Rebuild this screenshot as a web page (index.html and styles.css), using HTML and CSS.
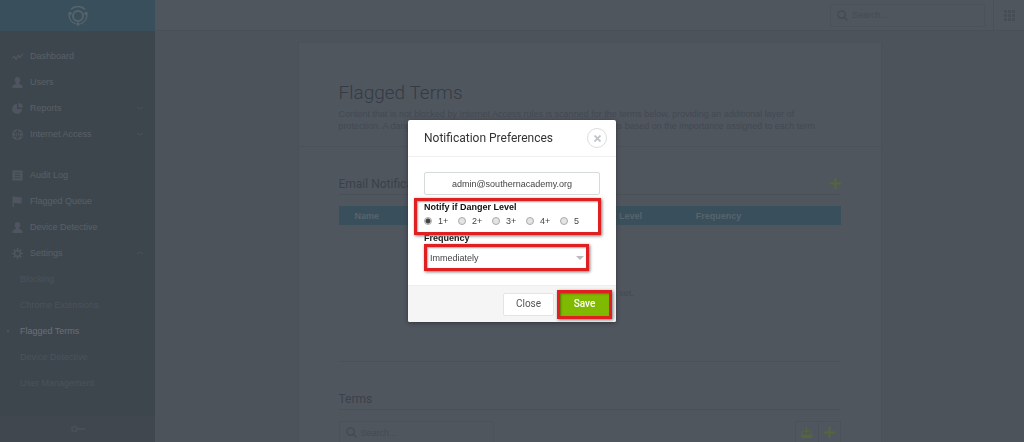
FILE: index.html
```html
<!DOCTYPE html>
<html lang="en">
<head>
    <meta charset="UTF-8">
    <meta name="viewport" content="width=device-width, initial-scale=1.0">
    <title>Flagged Terms</title>
    <link rel="stylesheet" href="styles.css">
</head>
<body>
    <div class="sidebar">
        <div class="logo">
            <svg width="20" height="20" viewBox="0 0 20 20" fill="none" stroke="currentColor">
                <circle cx="10" cy="10" r="5" stroke-width="2"/>
                <path d="M3 3.500a9.500 9.500 0 0 1 14 0M1.200 8.500a9 9 0 0 0 6.300 9.200M18.800 8.500a9 9 0 0 1-6.300 9.200" stroke-width="1.500"/>
                <g fill="currentColor" stroke="none"><circle cx="2" cy="7.500" r="1.800"/><circle cx="18" cy="7.500" r="1.800"/><circle cx="10" cy="18" r="1.800"/></g>
            </svg>
        </div>
        <nav class="nav">
            <ul class="menu">
                <li><a href="#"><svg class="icon" viewBox="0 0 12 12"><path d="M0 8l2.500-2 2 3L7 5l1.500 2L12 3" fill="none" stroke="currentColor" stroke-width="1.500"/></svg>Dashboard</a></li>
                <li><a href="#"><svg class="icon" viewBox="0 0 12 12"><path d="M6 0c2 0 3 1.500 3 3.200S8 6 7.500 7c0 1 4 1 4 3.500V12H.5v-1.500C.5 8 4.500 8 4.500 7 4 6 3 5 3 3.200S4 0 6 0z"/></svg>Users</a></li>
                <li><a href="#"><svg class="icon" viewBox="0 0 12 12"><path d="M5.500 1v5.500H11A5.500 5.500 0 1 1 5.500 1z"/><path d="M7 0a5 5 0 0 1 5 5H7z"/></svg>Reports<svg class="chevron" viewBox="0 0 6 4"><path d="M0 1l3 2 3-2"/></svg></a></li>
                <li><a href="#"><svg class="icon" viewBox="0 0 12 12"><circle cx="6" cy="6" r="6"/><path class="cut" d="M1 4h10M1 8h10M6 1v10M6 1C3 4 3 8 6 11M6 1c3 3 3 7 0 10"/></svg>Internet Access<svg class="chevron" viewBox="0 0 6 4"><path d="M0 1l3 2 3-2"/></svg></a></li>
            </ul>
            <ul class="menu">
                <li><a href="#"><svg class="icon" viewBox="0 0 12 12"><path d="M.5.500h11v11H.5z"/><path class="cut" d="M3 3.500h6M3 6h6M3 8.500h6"/></svg>Audit Log</a></li>
                <li><a href="#"><svg class="icon" viewBox="0 0 12 12"><path d="M.5.500h1.500V1c3-1 4 1 8.500 0v7c-4.500 1-5.500-1-8.500 0v4H.5z"/></svg>Flagged Queue</a></li>
                <li><a href="#"><svg class="icon" viewBox="0 0 12 12"><path d="M6 0c2 0 3 1.500 3 3.200S8 6 7.500 7c0 1 4 1 4 3.500V12H.5v-1.500C.5 8 4.500 8 4.500 7 4 6 3 5 3 3.200S4 0 6 0z"/></svg>Device Detective</a></li>
                <li><a href="#"><svg class="icon" viewBox="0 0 12 12" stroke="currentColor"><circle cx="6" cy="6" r="3.200" fill="none" stroke-width="1.800"/><path d="M6 0v2M6 10v2M0 6h2M10 6h2M1.800 1.800l1.400 1.400M8.800 8.800l1.400 1.400M10.200 1.800L8.800 3.200M3.200 8.800l-1.400 1.400" stroke-width="1.800"/></svg>Settings<svg class="chevron" viewBox="0 0 6 4"><path d="M0 3l3-2 3 2"/></svg></a></li>
            </ul>
            <ul class="submenu">
                <li><a href="#">Blocking</a></li>
                <li><a href="#">Chrome Extensions</a></li>
                <li class="active"><a href="#">Flagged Terms</a></li>
                <li><a href="#">Device Detective</a></li>
                <li><a href="#">User Management</a></li>
            </ul>
        </nav>
        <div class="sidebar-footer">
            <svg width="14" height="8" viewBox="0 0 14 8" fill="none" stroke="currentColor" stroke-width="2"><circle cx="3.500" cy="4" r="2.500"/><path d="M6 4h8"/></svg>
        </div>
    </div>

    <div class="main">
        <header class="topbar">
            <label class="search">
                <svg class="icon" viewBox="0 0 12 12"><path d="M8 8l3.500 3.500" stroke="currentColor" stroke-width="1.500"/><circle cx="5" cy="5" r="4" fill="none" stroke="currentColor" stroke-width="1.500"/></svg>
                <input type="text" placeholder="Search..." aria-label="Search">
            </label>
            <button class="apps" aria-label="Apps">
                <svg width="11" height="11" viewBox="0 0 11 11" fill="currentColor"><path d="M0 0h3v3H0zM4 0h3v3H4zM8 0h3v3H8zM0 4h3v3H0zM4 4h3v3H4zM8 4h3v3H8zM0 8h3v3H0zM4 8h3v3H4zM8 8h3v3H8z"/></svg>
            </button>
        </header>

        <div class="card">
            <div class="card-header">
                <h1>Flagged Terms</h1>
                <p>Content that is not blocked by Internet Access rules is scanned for the terms below, providing an additional layer of<br>protection. A danger level is then applied to the flagged pages and links based on the importance assigned to each term.</p>
            </div>
            <section class="notifications">
                <div class="section-title">
                    <h2>Email Notifications</h2>
                    <button class="add" aria-label="Add notification"><svg width="11" height="11" viewBox="0 0 11 11"><path d="M5.500 0v11M0 5.500h11" stroke="currentColor" stroke-width="2"/></svg></button>
                </div>
                <table>
                    <thead>
                        <tr><th>Name</th><th>Danger Level</th><th>Frequency</th></tr>
                    </thead>
                    <tbody>
                        <tr><td colspan="3">No email contacts set.</td></tr>
                    </tbody>
                </table>
            </section>
            <section class="terms">
                <div class="section-title">
                    <h2>Terms</h2>
                </div>
                <div class="toolbar">
                    <label class="search">
                        <svg class="icon" viewBox="0 0 12 12"><path d="M8 8l3.500 3.500" stroke="currentColor" stroke-width="1.500"/><circle cx="5" cy="5" r="4" fill="none" stroke="currentColor" stroke-width="1.500"/></svg>
                        <input type="text" placeholder="Search..." aria-label="Search terms">
                    </label>
                    <div class="tools">
                        <button aria-label="Import"><svg width="11" height="11" viewBox="0 0 11 11" fill="none" stroke="currentColor"><path d="M3 4H1.500L.5 7v3.500h10V7l-1-3H8M5.500 0v5M3.500 3.500l2 2 2-2"/><path d="M.5 9h10" stroke-width="3"/></svg></button>
                        <button aria-label="Add term"><svg width="11" height="11" viewBox="0 0 11 11"><path d="M5.500 0v11M0 5.500h11" stroke="currentColor" stroke-width="2"/></svg></button>
                    </div>
                </div>
            </section>
        </div>
    </div>

    <div class="overlay">
        <form class="modal" role="dialog" aria-labelledby="modalTitle">
            <div class="modal-header">
                <h3 id="modalTitle">Notification Preferences</h3>
                <button type="button" class="close" aria-label="Close"><svg width="7" height="7" viewBox="0 0 7 7"><path d="M.5.500l6 6M6.500.500l-6 6" stroke="currentColor" stroke-width="1.800"/></svg></button>
            </div>
            <div class="modal-body">
                <input class="email" type="text" value="admin@southernacademy.org" aria-label="Email">
                <div class="danger" role="radiogroup" aria-labelledby="dangerLabel">
                    <div class="field-label" id="dangerLabel">Notify if Danger Level</div>
                    <div class="levels">
                        <label><input type="radio" name="level" checked>1+</label>
                        <label><input type="radio" name="level">2+</label>
                        <label><input type="radio" name="level">3+</label>
                        <label><input type="radio" name="level">4+</label>
                        <label><input type="radio" name="level">5</label>
                    </div>
                </div>
                <label class="field-label" for="frequency">Frequency</label>
                <div class="select">
                    <select id="frequency">
                        <option>Immediately</option>
                        <option>Daily</option>
                        <option>Weekly</option>
                    </select>
                </div>
            </div>
            <div class="modal-footer">
                <button type="button" class="btn">Close</button>
                <button type="button" class="btn save">Save</button>
            </div>
        </form>
    </div>
</body>
</html>
```

FILE: styles.css
```css
* { box-sizing: border-box; margin: 0; padding: 0; }
body { display: flex; height: 100vh; overflow: hidden; background: #4d535b; color: #434952; font-family: "Liberation Sans", Arial, sans-serif; font-size: 9px; line-height: 12px; }
ul { list-style: none; }
a { color: inherit; text-decoration: none; }
button { border: none; background: none; color: inherit; font: inherit; cursor: pointer; }
input, select { font: inherit; color: inherit; }
svg { display: block; flex: none; }
.icon { width: 11px; height: 11px; fill: currentColor; }
.cut { fill: none; stroke: #3e464d; }

/* sidebar */
.sidebar { flex: none; width: 155px; display: flex; flex-direction: column; background: #3e464d; color: #596068; }
.logo { display: flex; justify-content: center; align-items: center; height: 31px; background: #394f5b; color: #55636d; }
.nav { flex: 1; padding-top: 12px; overflow: hidden; }
.menu + .menu { margin-top: 15px; }
.menu a { display: flex; align-items: center; gap: 7px; height: 26px; padding: 0 12px; }
.menu .icon { color: #4e555e; }
.chevron { width: 6px; height: 4px; margin-left: auto; fill: none; stroke: #4a515a; }
.submenu { color: #4b525b; }
.submenu li { display: flex; align-items: center; height: 26px; padding-left: 20px; }
.submenu .active { color: #6a7076; }
.submenu .active::before { content: ""; width: 2px; height: 2px; margin: 0 11px 0 -13px; border-radius: 50%; background: #3a6574; }
.sidebar-footer { display: flex; justify-content: center; align-items: center; height: 26px; background: #40474f; color: #484f57; }

/* page */
.main { flex: 1; display: flex; flex-direction: column; }
.topbar { flex: none; display: flex; justify-content: flex-end; align-items: center; height: 31px; border-bottom: 1px solid #4a5058; background: #50565e; }
.search { display: flex; align-items: center; gap: 4px; width: 155px; height: 23px; padding: 0 6px; border: 1px solid #4b525a; border-radius: 2px; }
.search .icon { color: #434a53; }
.search input { flex: 1; min-width: 0; border: none; outline: none; background: none; }
.search input::placeholder { color: #444b54; }
.apps { display: flex; justify-content: center; align-items: center; width: 31px; height: 30px; margin-left: 8px; border-left: 1px solid #4b5159; color: #464d55; }

.card { flex: 1; width: 100%; max-width: 584px; margin: 11px auto 0; border: 1px solid #4b5159; border-bottom: none; background: #50565e; }
.card-header { padding: 36px 40px 14px; border-bottom: 1px solid #4b5159; }
h1 { font: 300 19px/28px Roboto, sans-serif; color: #343b44; margin-bottom: 1px; }
.notifications, .terms { margin: 0 40px; }
.notifications { height: 215px; padding-top: 26px; border-bottom: 1px solid #4b5159; }
.terms { padding-top: 26px; }
.section-title { display: flex; justify-content: space-between; align-items: center; height: 22px; border-bottom: 1px solid #495058; }
h2 { font: 400 12px/16px Roboto, sans-serif; color: #3a414a; }
.add, .tools { color: #55663c; }
table { width: 100%; margin-top: 11px; border-collapse: collapse; table-layout: fixed; }
th { height: 19px; padding-left: 16px; background: #39505c; color: #57646d; text-align: left; }
th:first-child { width: 46%; }
th:nth-child(2) { width: 22%; }
td { padding-top: 62px; text-align: center; }
.toolbar { display: flex; justify-content: space-between; margin-top: 11px; }
.tools { display: flex; border: 1px solid #4b5159; }
.tools button { display: flex; justify-content: center; align-items: center; width: 22px; height: 21px; }
.tools button + button { border-left: 1px solid #4b5159; }

/* modal */
.overlay { position: fixed; inset: 0; display: flex; justify-content: center; align-items: center; }
.modal { width: 208px; border-radius: 2px; background: #fff; color: #444; overflow: hidden; box-shadow: 0 1px 4px #31363c; }
.modal-header { display: flex; justify-content: space-between; align-items: center; height: 37px; padding: 0 9px 0 16px; border-bottom: 1px solid #eee; }
h3 { font: 400 12px/16px Roboto, sans-serif; color: #333; }
.close { display: flex; justify-content: center; align-items: center; width: 20px; height: 20px; border: 1px solid #ddd; border-radius: 50%; color: #bfc4ca; }
.modal-body { padding: 15px 16px 14px; }
.email { display: block; width: 100%; height: 23px; border: 1px solid #d5dbdb; border-radius: 2px; text-align: center; }
.danger { position: relative; margin: 6px 0 4px; }
.danger::after { content: ""; position: absolute; inset: -3px -1px -7px -10px; border: 3px solid #e02020; box-shadow: 1px 1px 3px #777, inset 1px 1px 2px #9aa; pointer-events: none; }
.field-label { display: block; font-weight: bold; color: #111; }
.levels { display: flex; gap: 10px; height: 15px; }
.levels label { display: flex; align-items: center; gap: 6px; width: 24px; }
.levels input { appearance: none; flex: none; width: 8px; height: 8px; border: 1px solid #aaa; border-radius: 50%; background: #e4e4e4; }
.levels input:checked { background: radial-gradient(#444 0 2px, #e4e4e4 3px); }
.select { position: relative; width: 165px; }
.select::after { content: ""; position: absolute; right: 5px; top: 12px; border: 4px solid transparent; border-top-color: #bbb; border-bottom: none; pointer-events: none; }
select { appearance: none; display: block; width: 100%; height: 27px; padding-left: 3px; border: 3px solid #e02020; background: #fff; box-shadow: 1px 1px 3px #777, inset 1px 1px 2px #9aa; }
.modal-footer { display: flex; justify-content: flex-end; align-items: center; gap: 3px; height: 37px; padding-right: 4px; border-top: 1px solid #eee; background: #f5f5f5; }
.btn { width: 51px; height: 23px; border: 1px solid #e4e4e4; border-radius: 2px; background: #fff; font: 400 10px/12px Roboto, sans-serif; color: #555; }
.save { width: 55px; height: 29px; border: 3px solid #e02020; border-radius: 0; background: #80ba00; color: #fff; font-weight: 500; box-shadow: 1px 1px 3px #777, inset 1px 1px 2px #567b00; }
```
